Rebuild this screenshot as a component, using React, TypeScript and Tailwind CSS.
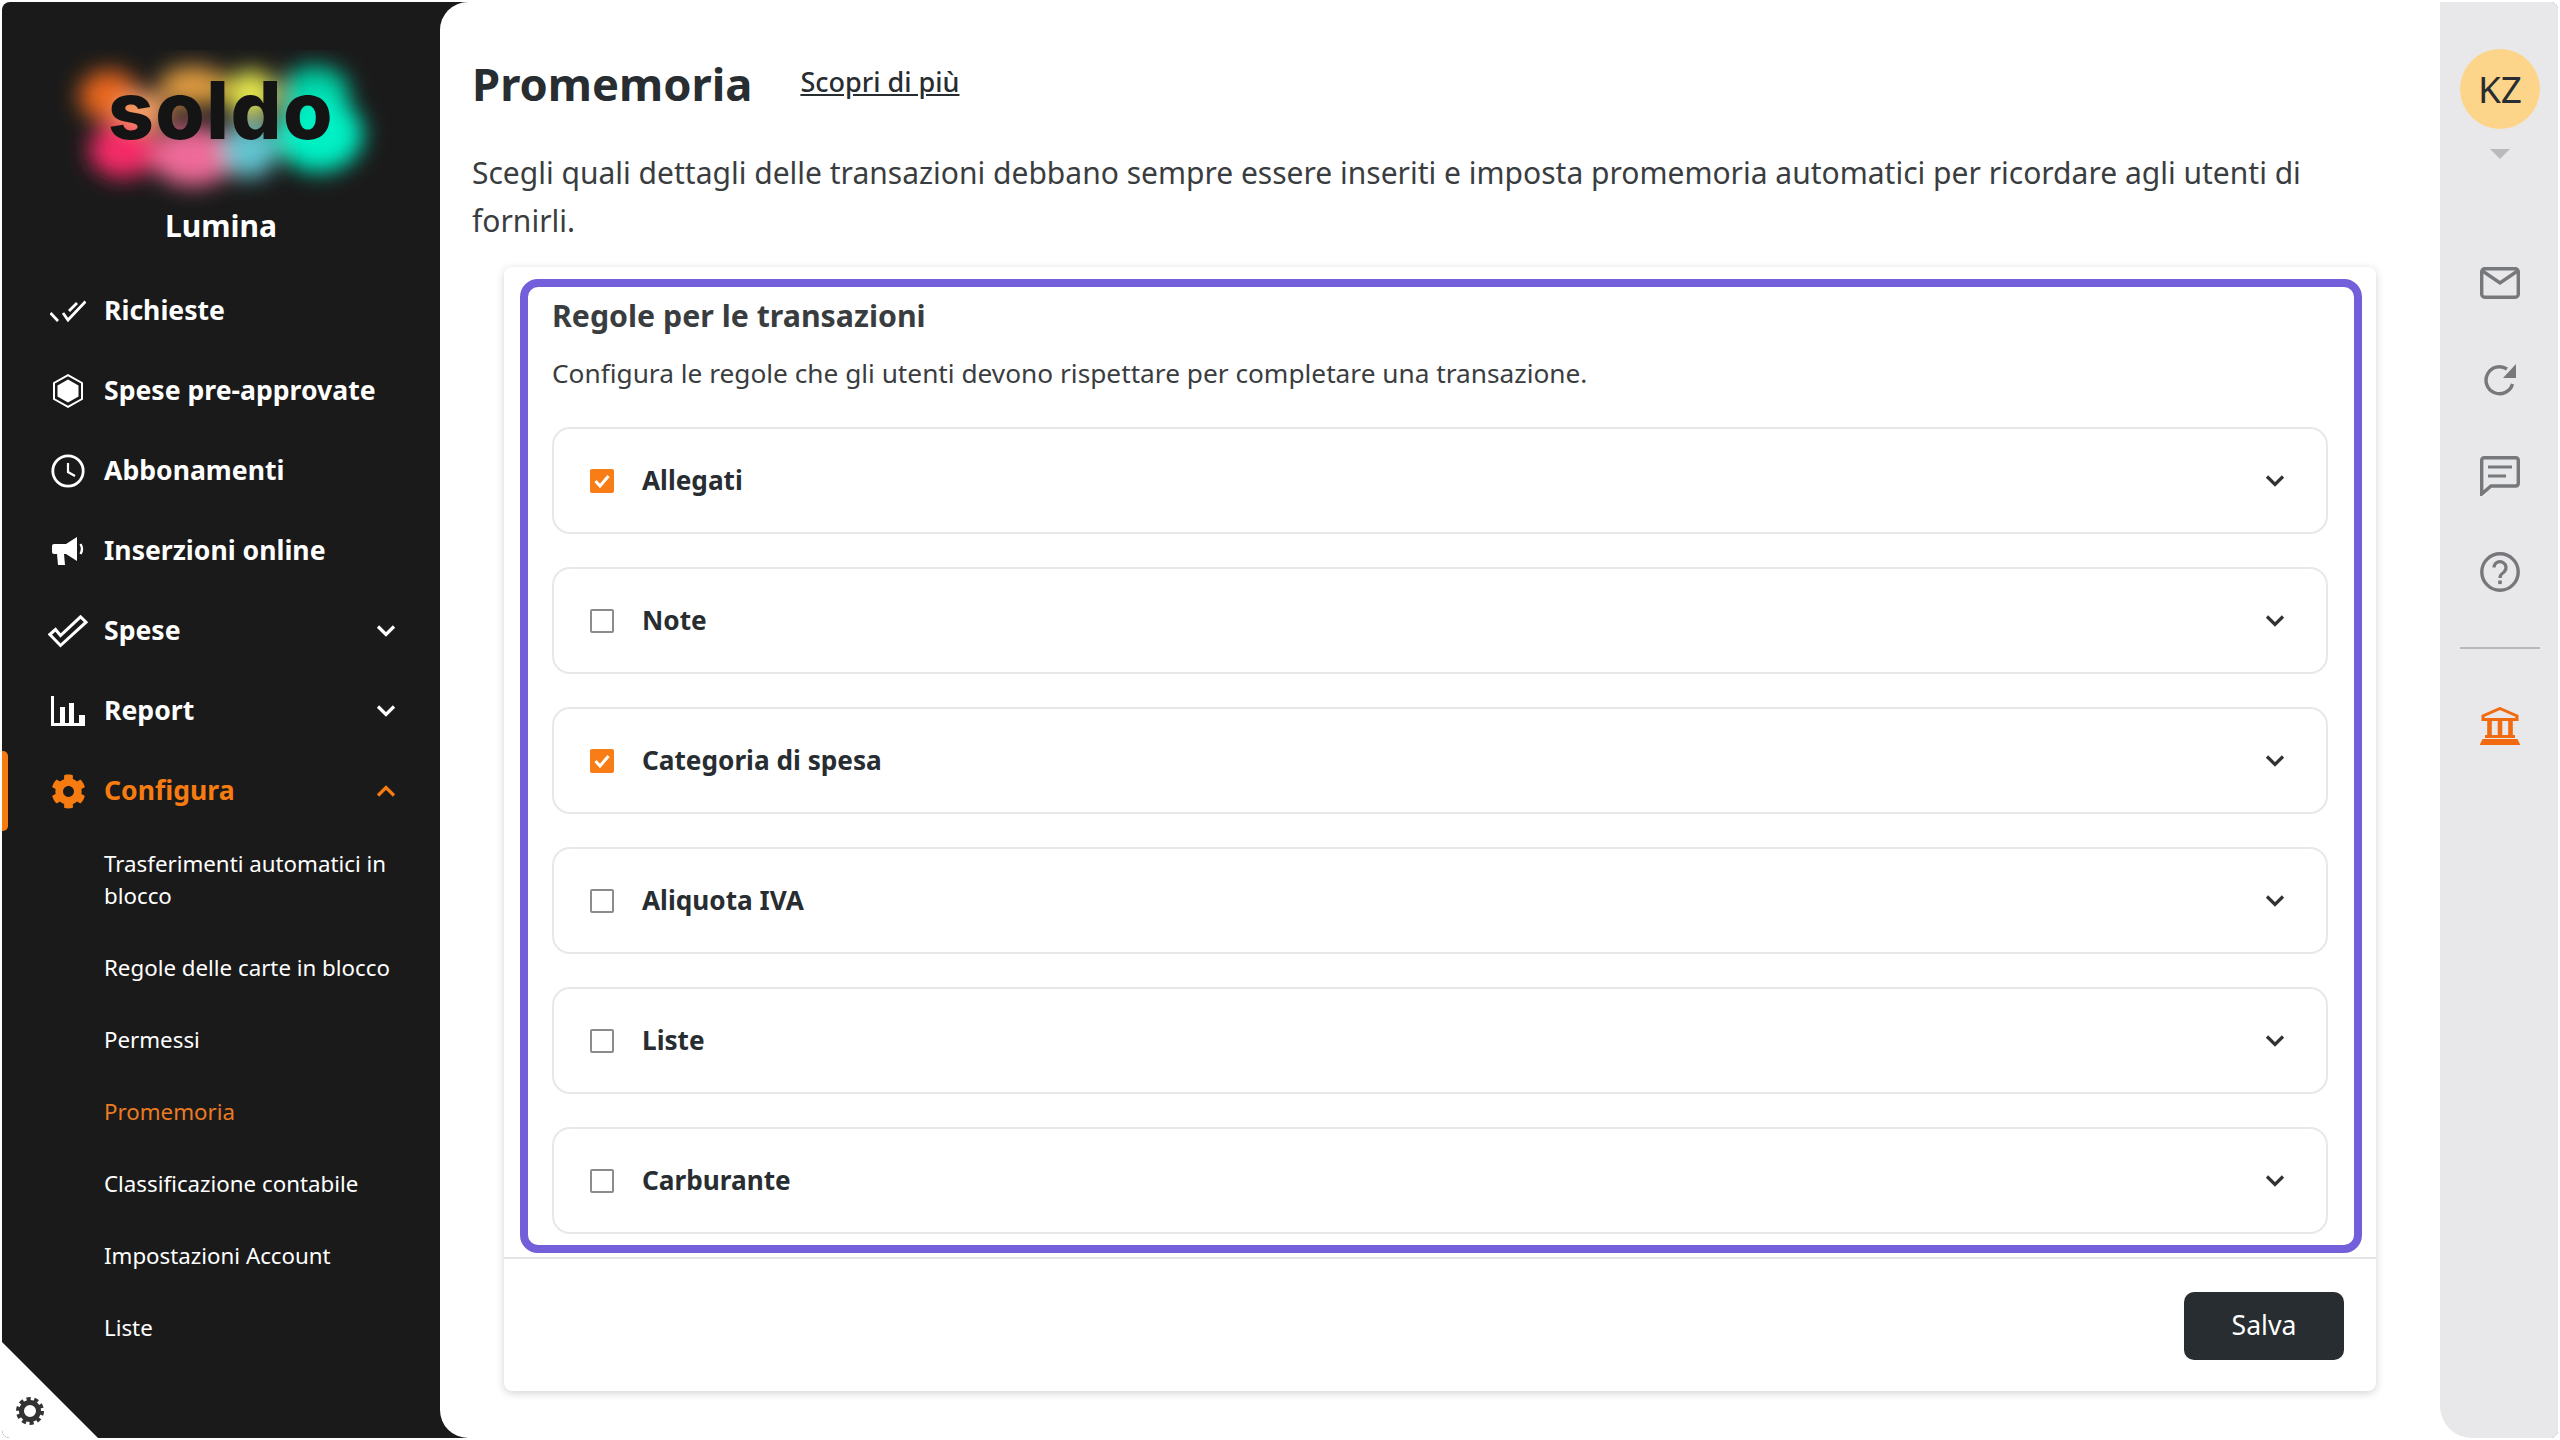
import { FaCog } from "react-icons/fa";

function Chevron({ up = false, className = "" }: { up?: boolean; className?: string }) {
  return (
    <svg viewBox="0 0 20 12" className={`w-[20px] h-[12px] ${className}`} fill="none" stroke="currentColor" strokeWidth="3.2">
      <polyline points={up ? "2,10.5 10,2.5 18,10.5" : "2,1.5 10,9.5 18,1.5"} />
    </svg>
  );
}

function SoldoLogo() {
  return (
    <div className="relative w-[340px] h-[176px]">
      <svg viewBox="0 0 340 176" className="absolute inset-0 w-full h-full">
        <defs>
          <filter id="glow" x="-30%" y="-30%" width="160%" height="160%">
            <feGaussianBlur stdDeviation="11" />
          </filter>
        </defs>
        <g filter="url(#glow)">
          <ellipse cx="58" cy="46" rx="30" ry="26" fill="#e8661c" />
          <ellipse cx="92" cy="62" rx="26" ry="20" fill="#f9a468" />
          <ellipse cx="72" cy="100" rx="34" ry="28" fill="#f52a68" />
          <ellipse cx="142" cy="36" rx="34" ry="20" fill="#e09c40" />
          <ellipse cx="142" cy="106" rx="42" ry="30" fill="#ee6a98" />
          <ellipse cx="200" cy="44" rx="26" ry="24" fill="#e4e64e" />
          <ellipse cx="198" cy="100" rx="28" ry="28" fill="#62c4d0" />
          <ellipse cx="264" cy="42" rx="34" ry="26" fill="#05d0a4" />
          <ellipse cx="268" cy="84" rx="44" ry="38" fill="#00f0c4" />
        </g>
      </svg>
      <div className="absolute left-[30px] top-[8px] w-[280px] text-center font-['Inter',sans-serif] font-extrabold text-[80px] leading-[104px] tracking-[1.5px] text-[#141414]">
        soldo
      </div>
    </div>
  );
}

const DoubleCheck = () => (
  <svg viewBox="0 0 36 24" className="w-[36px] h-[24px]" fill="none" stroke="white" strokeWidth="2.8">
    <path d="M0.5 14 L8 22" />
    <path d="M13 14 L18 21 L35.5 2.5" />
    <path d="M19 12 L27 4" />
  </svg>
);
const Hexagon = () => (
  <svg viewBox="0 0 32 34" className="w-[32px] h-[34px]">
    <polygon points="16,1.2 30,9 30,25 16,32.8 2,25 2,9" fill="none" stroke="white" strokeWidth="2" />
    <polygon points="16,5.5 26.5,11.5 26.5,22.5 16,28.5 5.5,22.5 5.5,11.5" fill="white" />
  </svg>
);
const Clock = () => (
  <svg viewBox="0 0 34 34" className="w-[34px] h-[34px]" fill="none" stroke="white">
    <circle cx="17" cy="17" r="15.2" strokeWidth="2.8" />
    <path d="M17 9 V18 L24 22" strokeWidth="2.2" />
  </svg>
);
const Megaphone = () => (
  <svg viewBox="0 0 34 30" className="w-[34px] h-[30px]">
    <path d="M3 8 H15 L26 1 V25 L15 18 H13 L14 29 H7 L6 18 H3 Q1 18 1 16 V10 Q1 8 3 8Z" fill="white" />
    <path d="M29.5 8 Q32.5 13 29.5 18" fill="none" stroke="white" strokeWidth="2.4" />
  </svg>
);
const CheckOutline = () => (
  <svg viewBox="0 0 40 33" className="w-[40px] h-[33px]">
    <polygon points="1.8,19.5 12.5,30.5 38,7.2 32.5,1.8 12.5,20.5 7.5,14.5" fill="none" stroke="white" strokeWidth="3" />
  </svg>
);
const Bars = () => (
  <svg viewBox="0 0 34 30" className="w-[34px] h-[30px]" fill="white">
    <rect x="0" y="0" width="3" height="30" />
    <rect x="0" y="27" width="34" height="3" />
    <rect x="9" y="11" width="5" height="17" />
    <rect x="18" y="7" width="5" height="21" />
    <rect x="28" y="19" width="6" height="9" />
  </svg>
);
const SmallGear = () => (
  <svg viewBox="0 0 28 28" className="w-[28px] h-[28px]" fill="none" stroke="#333333">
    <circle cx="14" cy="14" r="8.5" strokeWidth="5" />
    <circle cx="14" cy="14" r="12" strokeWidth="4" strokeDasharray="4.1 3.44" />
  </svg>
);

const navItems = [
  { label: "Richieste", icon: <DoubleCheck /> },
  { label: "Spese pre-approvate", icon: <Hexagon /> },
  { label: "Abbonamenti", icon: <Clock /> },
  { label: "Inserzioni online", icon: <Megaphone /> },
  { label: "Spese", icon: <CheckOutline />, chevron: true },
  { label: "Report", icon: <Bars />, chevron: true },
];

const subItems = [
  "Regole delle carte in blocco",
  "Permessi",
  "Promemoria",
  "Classificazione contabile",
  "Impostazioni Account",
  "Liste",
];

function Sidebar() {
  return (
    <aside className="relative w-[438px] shrink-0 text-white">
      <div className="h-[269px] flex flex-col items-center">
        <div className="mt-[48px]">
          <SoldoLogo />
        </div>
        <div className="mt-[-22px] text-[30px] leading-[44px] font-bold">Lumina</div>
      </div>

      <nav className="flex flex-col">
        {navItems.map((item) => (
          <div key={item.label} className="h-[80px] flex items-center">
            <div className="w-[102px] pl-[46px] flex justify-start">
              <div className="w-[40px] flex justify-center">{item.icon}</div>
            </div>
            <span className="flex-1 text-[26.6px] font-bold">{item.label}</span>
            {item.chevron && <Chevron className="mr-[44px]" />}
          </div>
        ))}

        <div className="relative h-[80px] flex items-center text-[#f67c12]">
          <div className="absolute left-0 top-0 w-[6px] h-[80px] rounded-r-[5px] bg-[#f67c12]" />
          <div className="w-[102px] pl-[46px]">
            <div className="w-[40px] flex justify-center">
              <FaCog size={35} />
            </div>
          </div>
          <span className="flex-1 text-[26.6px] font-bold">Configura</span>
          <Chevron up className="mr-[44px]" />
        </div>

        <div className="flex flex-col pl-[102px] pr-[30px] text-[22.3px] leading-[32px]">
          <div className="pt-[17px] pb-[20px]">Trasferimenti automatici in blocco</div>
          {subItems.map((s) => (
            <div key={s} className={`py-[20px] ${s === "Promemoria" ? "text-[#ea7a22]" : ""}`}>
              {s}
            </div>
          ))}
        </div>
      </nav>

      <div className="absolute left-0 bottom-0 w-[96px] h-[96px] bg-white [clip-path:polygon(0_0,100%_100%,0_100%)]" />
      <div className="absolute left-[14px] bottom-[13px]">
        <SmallGear />
      </div>
    </aside>
  );
}

const rules = [
  { label: "Allegati", checked: true },
  { label: "Note", checked: false },
  { label: "Categoria di spesa", checked: true },
  { label: "Aliquota IVA", checked: false },
  { label: "Liste", checked: false },
  { label: "Carburante", checked: false },
];

function RuleRow({ label, checked }: { label: string; checked: boolean }) {
  return (
    <div className="h-[107px] flex items-center border-2 border-[#e8e8e8] rounded-[18px] pl-[36px] pr-[41px]">
      {checked ? (
        <div className="w-[24px] h-[24px] rounded-[2px] bg-[#f97d16] flex items-center justify-center">
          <svg viewBox="0 0 20 20" className="w-[20px] h-[20px]" fill="none" stroke="white" strokeWidth="3">
            <polyline points="3.5,10 8,15 16.5,5" />
          </svg>
        </div>
      ) : (
        <div className="w-[24px] h-[24px] rounded-[2px] border-2 border-[#8c8c8c]" />
      )}
      <span className="ml-[28px] flex-1 text-[26.2px] font-bold text-[#272d30]">{label}</span>
      <Chevron className="text-[#333333]" />
    </div>
  );
}

function RightBar() {
  return (
    <aside className="w-[118px] shrink-0 bg-[#e8e8ea] rounded-bl-[32px] pl-[2px] flex flex-col items-center text-[#77787c]">
      <div className="mt-[47px] w-[80px] h-[80px] rounded-full bg-[#fdd58a] flex items-center justify-center text-[37px] text-[#272d30]">
        KZ
      </div>
      <div className="mt-[20px] w-0 h-0 border-x-[10px] border-x-transparent border-t-[10px] border-t-[#b9babd]" />

      <svg viewBox="0 0 40 32" className="mt-[108px] w-[40px] h-[32px]" fill="none" stroke="currentColor" strokeWidth="3.4">
        <rect x="1.7" y="1.7" width="36.6" height="28.6" rx="3" />
        <polyline points="2.5,4 20,16 37.5,4" />
      </svg>
      <svg viewBox="0 0 34 34" className="mt-[64px] w-[34px] h-[34px]" fill="none" stroke="currentColor" strokeWidth="3.4">
        <path d="M29.5 21 A13.5 13.5 0 1 1 24 6" />
        <polygon points="33,1 33,15 20,15" fill="currentColor" stroke="none" />
      </svg>
      <svg viewBox="0 0 40 40" className="mt-[59px] w-[40px] h-[40px]" fill="none" stroke="currentColor" strokeWidth="3.4">
        <path d="M4.5 1.7 H35.5 Q38.3 1.7 38.3 4.5 V27 Q38.3 30 35.5 30 H11 L1.7 38 V4.5 Q1.7 1.7 4.5 1.7Z" />
        <path d="M8 11 H32 M8 20 H26" strokeWidth="3" />
      </svg>
      <svg viewBox="0 0 40 40" className="mt-[56px] w-[40px] h-[40px]" fill="none" stroke="currentColor" strokeWidth="3.4">
        <circle cx="20" cy="20" r="18.2" />
        <path d="M14 15.5 A6 6 0 1 1 23.5 20.5 C21 22 20 23 20 26" strokeWidth="3.2" />
        <rect x="18.2" y="28.5" width="3.6" height="3.6" fill="currentColor" stroke="none" />
      </svg>
      <div className="mt-[55px] w-[80px] h-[2px] bg-[#b8b9bc]" />
      <svg viewBox="0 0 40 38" className="mt-[58px] w-[40px] h-[38px] text-[#f26a0f]" fill="none" stroke="currentColor" strokeWidth="3">
        <path d="M20 1.5 L37 9 V12.5 H3 V9 Z" />
        <path d="M9.5 14 V28 M20 14 V28 M30.5 14 V28" strokeWidth="4.6" />
        <path d="M5 29.5 H35" strokeWidth="3" />
        <path d="M3.5 33.5 H36.5 L38 36.5 H2 Z" fill="currentColor" />
      </svg>
    </aside>
  );
}

export default function App() {
  return (
    <div className="w-[2560px] h-[1440px] bg-white p-[2px] font-['Noto_Sans',sans-serif]">
      <div className="w-full h-full flex bg-[#1a1a1a] rounded-[8px] overflow-hidden">
        <Sidebar />
        <div className="flex-1 flex bg-white rounded-l-[28px] overflow-hidden">
          <main className="flex-1 flex flex-col">
            <div className="mt-[54px] ml-[32px] flex items-center h-[56px]">
              <h1 className="text-[45.3px] font-bold text-[#272d30] leading-[56px]">Promemoria</h1>
              <a className="ml-[48px] mb-[4px] text-[27px] font-medium text-[#272d30] underline">Scopri di più</a>
            </div>
            <p className="mt-[37px] ml-[32px] mr-[100px] text-[30px] leading-[48px] text-[#3a3d40]">
              Scegli quali dettagli delle transazioni debbano sempre essere inseriti e imposta promemoria automatici per ricordare agli utenti di fornirli.
            </p>

            <section className="mt-[22px] mx-[64px] h-[1124px] rounded-[8px] bg-white shadow-[0_2px_8px_rgba(0,0,0,0.18)] flex flex-col">
              <div className="mt-[12px] ml-[16px] mr-[14px] h-[974px] border-[8px] border-[#725fd9] rounded-[18px] pl-[24px] pr-[26px]">
                <h2 className="mt-[6px] text-[30.3px] leading-[46px] font-bold text-[#3a3d40]">Regole per le transazioni</h2>
                <p className="mt-[14px] text-[26.25px] leading-[40px] text-[#3a3d40]">
                  Configura le regole che gli utenti devono rispettare per completare una transazione.
                </p>
                <div className="mt-[34px] flex flex-col gap-[33px]">
                  {rules.map((r) => (
                    <RuleRow key={r.label} label={r.label} checked={r.checked} />
                  ))}
                </div>
              </div>
              <div className="mt-[4px] pt-[2px] flex-1 border-t-2 border-[#e4e4e4] flex items-center justify-end pr-[32px]">
                <button className="w-[160px] h-[68px] rounded-[10px] bg-[#272d30] text-white text-[26.6px]">Salva</button>
              </div>
            </section>
          </main>
          <RightBar />
        </div>
      </div>
    </div>
  );
}
